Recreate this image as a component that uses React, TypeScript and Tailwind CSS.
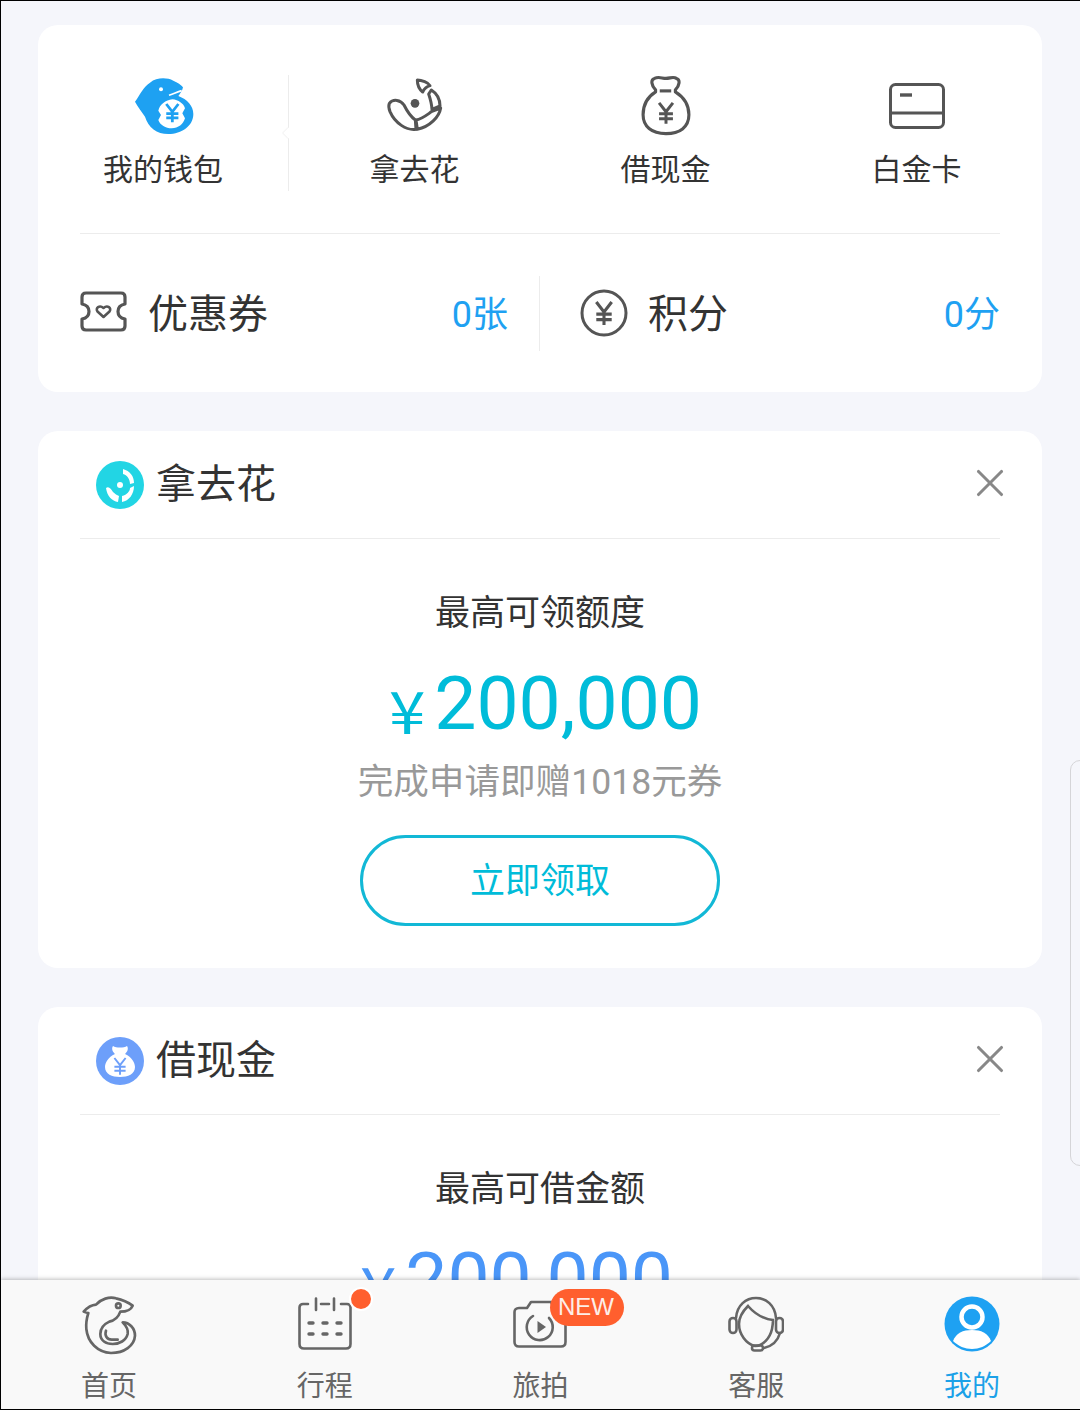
import React from 'react';
import { X } from 'lucide-react';

// yen sign drawn as strokes, for use inside the icons
function Yen({ x, y, s = 1, color = '#555', w = 2.6 }: { x: number; y: number; s?: number; color?: string; w?: number }) {
    return (
        <g transform={`translate(${x} ${y}) scale(${s})`} fill="none" stroke={color} strokeWidth={w}>
            <path d="M-7 -10 L0 -1 L7 -10 M0 -1 V11 M-7 1 H7 M-7 6 H7" />
        </g>
    );
}

function WalletIcon() {
    return (
        <svg className="ml-[4px]" width="80" height="72" viewBox="0 0 240 216">
            <path
                fill="#1ea1f2"
                d="M30 95 C45 75 55 50 75 38 C95 22 125 22 145 32 C158 38 168 44 174 52 C172 62 166 70 160 78 C187 88 205 108 205 132 C205 168 170 192 130 192 C95 192 70 172 60 140 C50 125 38 110 30 95Z"
            />
            <path
                fill="#fff"
                d="M142 88 C160 90 176 100 180 115 L172 130 L180 145 C175 162 160 175 140 175 C122 175 105 165 100 150 L108 135 L100 122 C104 104 122 90 142 88Z"
            />
            <circle cx="108" cy="58" r="6" fill="#fff" />
            <path d="M132 76 C144 72 157 66 170 62" stroke="#fff" strokeWidth="5" fill="none" />
            <Yen x={142} y={128} s={2.6} color="#1ea1f2" w={3.2} />
        </svg>
    );
}

function FlowerIcon() {
    return (
        <svg className="-mt-[2px]" width="70" height="70" viewBox="0 0 210 210" fill="none" stroke="#555" strokeWidth="9" strokeLinejoin="round">
            <path d="M112 30 C125 30 145 38 150 47 C140 50 132 58 128 66 C118 58 112 42 112 30Z" />
            <path d="M154 60 C170 70 180 88 180 108 L156 118 C155 100 150 84 146 72Z" />
            <path d="M108 150 C125 148 140 135 156 124 L182 114 C178 140 150 170 112 178Z" />
            <path d="M28 100 C40 85 62 90 72 105 C82 125 92 140 106 150 L108 178 C80 182 45 160 30 125 C26 115 25 108 28 100Z" />
            <circle cx="105" cy="100" r="13" fill="#555" stroke="none" />
        </svg>
    );
}

function BagIcon() {
    return (
        <svg width="50" height="60" viewBox="0 0 48 57" fill="none" stroke="#555" strokeWidth="3" strokeLinejoin="round">
            <path d="M13 2 C17 0 20 2 24 2 C28 2 31 0 34 2 C38 3 37 9 33 13 L33 15 C41 20 46 28 46 37 C46 49 37 55 24 55 C10 55 2 48 2 37 C2 28 6 20 14 15 L14 13 C10 9 9 3 13 2Z" />
            <path d="M18 14 H29" />
            <Yen x={24} y={35} s={0.95} w={3} />
        </svg>
    );
}

function CardIcon() {
    return (
        <svg width="56" height="46" viewBox="0 0 56 46" fill="none" stroke="#555" strokeWidth="3">
            <rect x="1.5" y="1.5" width="53" height="43" rx="5" />
            <path d="M2 30 H54" />
            <path d="M11 12 H23" strokeWidth="3.4" />
        </svg>
    );
}

function TicketIcon() {
    return (
        <svg className="-mt-[4px]" width="47" height="41" viewBox="0 0 47 41" fill="none" stroke="#555" strokeWidth="3.2" strokeLinejoin="round">
            <path d="M6 2 H41 C43.5 2 45 3.5 45 6 V13 C40 14 38 17 38 20.5 C38 24 40 27 45 28 V35 C45 37.5 43.5 39 41 39 H6 C3.5 39 2 37.5 2 35 V28 C7 27 9 24 9 20.5 C9 17 7 14 2 13 V6 C2 3.5 3.5 2 6 2Z" />
            <path d="M23.5 26 L17.5 20.5 C15 17 19.5 13.5 23.5 17 C27.5 13.5 32 17 29.5 20.5Z" strokeWidth="2.6" />
        </svg>
    );
}

function PointsIcon() {
    return (
        <svg className="-mt-[2px]" width="48" height="48" viewBox="0 0 48 48" fill="none" stroke="#555">
            <circle cx="24" cy="24" r="22" strokeWidth="3" />
            <Yen x={24} y={24} s={1.1} w={2.8} />
        </svg>
    );
}

function HomeIcon() {
    return (
        <svg width="75" height="70" viewBox="0 0 225 210" fill="none" stroke="#666" strokeWidth="8" strokeLinejoin="round" strokeLinecap="round">
            <path d="M38 68 C50 55 62 48 75 47 C90 30 115 22 135 28 C155 32 172 40 185 50 C180 62 165 68 148 68 C142 85 130 95 115 98 C100 105 88 118 88 135 C88 155 105 165 125 165 C145 165 165 155 170 135 C172 125 165 110 155 100 C175 100 192 118 192 140 C190 170 160 192 120 192 C80 190 50 160 46 120 C44 100 48 85 52 72 C47 72 42 70 38 68Z" />
            <path d="M105 125 C100 140 108 152 122 152 H140" />
            <circle cx="142" cy="50" r="7" />
        </svg>
    );
}

function CalendarIcon() {
    return (
        <svg width="54" height="54" viewBox="0 0 54 54" fill="none" stroke="#666" strokeWidth="2.6" strokeLinecap="round">
            <path d="M10 7 H5 C3 7 1.5 8.5 1.5 10.5 V47 C1.5 50 3 51.5 6 51.5 H48 C51 51.5 52.5 50 52.5 47 V10.5 C52.5 8.5 51 7 49 7 H43" />
            <path d="M18 1.5 V13 M36 1.5 V13 M23 7 H31" />
            <path d="M11 26 H15 M25 26 H29 M39 26 H43 M11 37 H15 M25 37 H29 M39 37 H43" strokeWidth="3.4" />
        </svg>
    );
}

function CameraIcon() {
    return (
        <svg width="54" height="48" viewBox="0 0 54 48" fill="none" stroke="#666" strokeWidth="2.6" strokeLinejoin="round" strokeLinecap="round">
            <path d="M6 8 H14 L18 2 H38 L41 8 H48 C51 8 52.5 10 52.5 12 V42 C52.5 45 51 46.5 48 46.5 H6 C3 46.5 1.5 45 1.5 42 V12 C1.5 10 3 8 6 8Z" />
            <path d="M20 16 A13 13 0 1 0 36 18" />
            <path d="M24.5 21 L33 27 L24.5 33Z" fill="#666" stroke="none" />
        </svg>
    );
}

function ServiceIcon() {
    return (
        <svg width="56" height="56" viewBox="0 0 56 56" fill="none" stroke="#666" strokeWidth="2.6" strokeLinecap="round">
            <path d="M8 22 C9 9 18 2 28 2 C38 2 47 9 48 22" />
            <path d="M20 10 C15 15 11 21 11 28 C11 38 18 48 27 50 C35 50 42 42 44 33 C45 28 45 26 45 24 C36 23 27 18 20 10Z" />
            <rect x="1.5" y="22" width="7" height="15" rx="3.5" />
            <rect x="48" y="22" width="7" height="15" rx="3.5" />
            <path d="M52 37 C50 44 45 50 36 52" />
            <rect x="24" y="49.5" width="11" height="5" rx="2.5" />
        </svg>
    );
}

function UserIcon() {
    return (
        <svg width="56" height="58" viewBox="0 0 56 58">
            <circle cx="28" cy="29" r="27.5" fill="#1ea1f2" />
            <circle cx="28" cy="22" r="10.5" fill="none" stroke="#fff" strokeWidth="4.5" />
            <path d="M9 46 C12 38 19 35 28 35 C37 35 44 38 47 46 C42 51 35 54 28 54 C21 54 14 51 9 46Z" fill="#fff" />
        </svg>
    );
}

function QuickItem({ icon, label, divider }: { icon: React.ReactNode; label: string; divider?: boolean }) {
    return (
        <div className={`relative flex h-[116px] flex-col items-center ${divider ? 'border-r border-[#ececec]' : ''}`}>
            <div className="flex h-[62px] items-center justify-center">{icon}</div>
            <div className="mt-[13px] text-[30px] leading-[40px] text-[#333]">{label}</div>
            {divider && <div className="absolute -right-[5px] top-[54px] h-2 w-2 rotate-45 bg-white shadow-[-1px_1px_1px_rgba(0,0,0,0.05)]" />}
        </div>
    );
}

function PromoCard({
    badge,
    title,
    caption,
    color,
    shift,
    children,
}: {
    badge: React.ReactNode;
    title: string;
    caption: string;
    color: string;
    shift?: boolean;
    children?: React.ReactNode;
}) {
    return (
        <div className="rounded-[20px] bg-white px-[42px]">
            <div className="flex h-[108px] items-center border-b border-[#ececec] pl-[16px]">
                {badge}
                <div className="ml-[12px] text-[40px] leading-[50px] text-[#333]">{title}</div>
                <X className="ml-auto -mr-[13px] -mt-[3px]" size={46} strokeWidth={1.6} color="#888" />
            </div>
            <div className="mt-[52px] text-center text-[35px] leading-[46px] text-[#333]">{caption}</div>
            <div className={`mt-[21px] flex h-[90px] items-center justify-center pl-[13px] ${shift ? 'pr-[58px]' : ''}`} style={{ color }}>
                <span className="mr-[11px] mt-[12px] inline-block scale-x-[1.13] font-['Noto_Sans_CJK_SC',sans-serif] text-[58px] leading-none">¥</span>
                <span className="text-[75px] leading-none">200,000</span>
            </div>
            {children}
        </div>
    );
}

export default function App() {
    return (
        <div className="relative flex h-[1410px] w-[1080px] flex-col overflow-hidden border-y border-l border-black bg-[#f5f6fb] font-[Roboto,'Noto_Sans_CJK_SC',sans-serif]">
            <div className="flex min-h-0 flex-1 flex-col gap-[39px] overflow-hidden pl-[37px] pr-[38px] pt-[24px]">
                <div className="h-[367px] shrink-0 rounded-[20px] bg-white">
                    <div className="grid grid-cols-4 pt-[50px]">
                        <QuickItem icon={<WalletIcon />} label="我的钱包" divider />
                        <QuickItem icon={<FlowerIcon />} label="拿去花" />
                        <QuickItem icon={<BagIcon />} label="借现金" />
                        <QuickItem icon={<CardIcon />} label="白金卡" />
                    </div>
                    <div className="mx-[42px] mt-[42px] border-t border-[#ececec]" />
                    <div className="mx-[42px] mt-[42px] grid h-[75px] grid-cols-2">
                        <div className="flex h-full items-center border-r border-[#ececec] pr-[31px]">
                            <TicketIcon />
                            <span className="ml-[21px] mt-[2px] text-[40px] leading-[50px] text-[#333]">优惠券</span>
                            <span className="ml-auto mt-[2px] text-[36px] leading-[46px] text-[#1ea1f2]">0张</span>
                        </div>
                        <div className="flex h-full items-center pl-[40px]">
                            <PointsIcon />
                            <span className="ml-[20px] mt-[2px] text-[40px] leading-[50px] text-[#333]">积分</span>
                            <span className="ml-auto mt-[2px] text-[36px] leading-[46px] text-[#1ea1f2]">0分</span>
                        </div>
                    </div>
                </div>

                <div className="shrink-0">
                    <PromoCard
                        badge={
                            <svg width="48" height="48" viewBox="0 0 48 48">
                                <circle cx="24" cy="24" r="24" fill="#22d5e4" />
                                <path d="M10 27 C13 25 15 28 17 31 C19 33 21 34 23 35 L22 41 C16 40 11 35 10 27Z M26 35 C31 34 34 30 34 27 L38 25 C38 33 33 40 26 41Z M27 8 C34 10 38 15 38 22 L34 23 C34 18 31 14 27 13Z" fill="#fff" />
                                <circle cx="24" cy="24" r="3" fill="#fff" />
                            </svg>
                        }
                        title="拿去花"
                        caption="最高可领额度"
                        color="#00bcd9"
                    >
                        <div className="mt-[11px] text-center text-[35.6px] leading-[46px] text-[#999]">完成申请即赠1018元券</div>
                        <div className="flex justify-center pb-[42px] pt-[30px]">
                            <div className="flex h-[91px] w-[360px] items-center justify-center rounded-full border-[3px] border-[#12b8d6] pt-[3px] text-[35px] text-[#00bcd9]">
                                立即领取
                            </div>
                        </div>
                    </PromoCard>
                </div>

                <div className="shrink-0">
                    <PromoCard
                        badge={
                            <svg width="48" height="48" viewBox="0 0 48 48">
                                <circle cx="24" cy="24" r="24" fill="#6d9ffa" />
                                <path d="M17 9 C20 11 28 11 31 9 C33 12 31 15 29 17 C36 20 39 26 39 30 C39 37 32 40 24 40 C16 40 9 37 9 30 C9 26 12 20 19 17 C17 15 15 12 17 9Z" fill="#fff" />
                                <Yen x={24} y={29} s={0.8} color="#6d9ffa" w={2.4} />
                            </svg>
                        }
                        title="借现金"
                        caption="最高可借金额"
                        color="#4a96f8"
                        shift
                    />
                </div>
            </div>

            <div className="relative z-10 grid h-[129px] shrink-0 grid-cols-5 bg-[#f9f9f9] shadow-[0_-1px_4px_rgba(0,0,0,0.25)]">
                <TabItem icon={<HomeIcon />} label="首页" />
                <TabItem
                    icon={<CalendarIcon />}
                    label="行程"
                    badge={<div className="absolute left-[51px] -top-[8px] h-[24px] w-[24px] rounded-full border-2 border-white bg-[#ff5f2e]" />}
                />
                <TabItem
                    icon={<CameraIcon />}
                    label="旅拍"
                    badge={
                        <div className="absolute left-[37px] -top-[6px] flex h-[37px] w-[74px] items-center justify-center rounded-full bg-[#ff5f2e] pb-[2px] pr-[3px] font-['Liberation_Sans',sans-serif] text-[24px] text-[#fdeee8]">
                            NEW
                        </div>
                    }
                />
                <TabItem icon={<ServiceIcon />} label="客服" />
                <TabItem icon={<UserIcon />} label="我的" active />
            </div>

            {/* floating edge handle of the phone */}
            <div className="absolute -right-[4px] top-[759px] h-[406px] w-[14px] rounded-l-[10px] border border-[#d5d5d8]" />
        </div>
    );
}

function TabItem({ icon, label, badge, active }: { icon: React.ReactNode; label: string; badge?: React.ReactNode; active?: boolean }) {
    return (
        <div className="flex flex-col items-center pt-[15px]">
            <div className="relative flex h-[58px] items-center justify-center">
                {icon}
                {badge}
            </div>
            <div className={`mt-[16px] text-[28px] leading-[36px] ${active ? 'text-[#1ba1e8]' : 'text-[#666]'}`}>{label}</div>
        </div>
    );
}
